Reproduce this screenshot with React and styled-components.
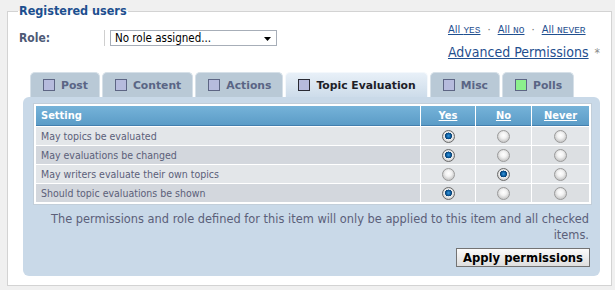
import React from "react";
import styled, { createGlobalStyle } from "styled-components";

const GlobalStyle = createGlobalStyle`
  html, body {
    margin: 0;
    background: #f0f0f0;
  }
  body {
    font-family: "DejaVu Sans Condensed", "DejaVu Sans", sans-serif;
    font-stretch: condensed;
    font-size: 10.5px;
  }
`;

const Box = styled.fieldset`
  margin: 4px 3px 0 7px;
  padding: 0 11px 9px 11px;
  border: 1px solid #d3d3d3;
  background: #fff;
  min-width: 0;
`;

const Legend = styled.legend`
  padding: 0 1px;
  margin-left: -1px;
  font-size: 12.5px;
  line-height: 14px;
  font-weight: bold;
  color: #1d4f8f;
`;

const TopRow = styled.div`
  display: flex;
  align-items: flex-start;
`;

const RoleGroup = styled.div`
  display: flex;
  align-items: center;
  margin-top: 12px;
`;

const RoleLabel = styled.label`
  width: 85px;
  font-size: 12px;
  font-weight: bold;
  color: #4e5a76;
`;

const Separator = styled.span`
  width: 1px;
  height: 16px;
  background: #cfcfcf;
  margin-right: 5px;
`;

const SelectWrap = styled.div`
  position: relative;
  width: 167px;
  height: 16px;
`;

const Select = styled.select`
  appearance: none;
  width: 100%;
  height: 16px;
  margin: 0;
  padding: 0 0 0 4px;
  border: 1px solid #a7aeb8;
  border-radius: 0;
  background: #fff;
  font-family: inherit;
  font-stretch: inherit;
  font-size: 11.5px;
  color: #000;
`;

const Arrow = styled.svg`
  position: absolute;
  right: 6px;
  top: 7px;
  pointer-events: none;
`;

const LinkGroup = styled.div`
  margin-left: auto;
  margin-top: 5px;
  display: flex;
  flex-direction: column;
  align-items: flex-start;
  gap: 8px;
`;

const QuickLinks = styled.div`
  display: flex;
  align-items: baseline;
  color: #555;
  font-size: 11px;
`;

const Link = styled.a`
  color: #1f4f8f;
  text-decoration: underline;
  font-size: ${(p) => (p.$big ? "14px" : "inherit")};
`;

const Caps = styled.span`
  font-family: "Liberation Mono", monospace;
  font-size: 9.5px;
  text-transform: uppercase;
`;

const Dot = styled.span`
  margin: 0 7px;
  color: #666;
`;

const Star = styled.span`
  margin-left: 6px;
  color: #8a8a8a;
  font-size: 12px;
`;

const Tabs = styled.div`
  display: flex;
  gap: 2px;
  margin: 12px 0 0 11px;
`;

const Tab = styled.div`
  display: flex;
  align-items: center;
  gap: 6px;
  height: 25px;
  box-sizing: border-box;
  padding: 0 11px 0 12px;
  border: 1px solid ${(p) => (p.$active ? "#f4f8fc" : "#d6e0e8")};
  border-bottom: none;
  border-radius: 5px 5px 0 0;
  background: ${(p) =>
    p.$active ? "linear-gradient(#e8f0f8, #cddcea)" : "#b9c9d6"};
  color: ${(p) => (p.$active ? "#1e1e28" : "#5a6585")};
  font-family: "DejaVu Sans", sans-serif;
  font-stretch: normal;
  font-size: 10.8px;
  font-weight: bold;
`;

const Check = styled.span`
  width: 12px;
  height: 12px;
  box-sizing: border-box;
  border: 1px solid ${(p) => (p.$active ? "#2a2a33" : "#5d6584")};
  background: ${(p) => (p.$green ? "#8cf08c" : "#b6bbdd")};
`;

const Panel = styled.div`
  margin-left: 4px;
  padding: 7px 9px 9px 11px;
  background: #c9d9e8;
  border-radius: 6px;
`;

const Table = styled.table`
  width: 100%;
  border-collapse: separate;
  border-spacing: 1px;
  border: 1px solid #fff;
  outline: 1px solid #c2ced9;
  background: #fff;
`;

const Th = styled.th`
  height: 19px;
  padding: 0 5px;
  border-bottom: 1px solid #437fae;
  background: linear-gradient(#76b3d9, #5b9cc7);
  color: #fff;
  font-size: 11px;
  font-weight: bold;
  text-align: ${(p) => (p.$center ? "center" : "left")};
  text-decoration: ${(p) => (p.$center ? "underline" : "none")};
  width: ${(p) => p.$w || "auto"};
`;

const Td = styled.td`
  height: 18px;
  padding: 0 5px;
  color: #5b6079;
  background: ${(p) => (p.$dark ? (p.$center ? "#dcdfe2" : "#d3d7dd") : "#e3e6e9")};
  text-align: ${(p) => (p.$center ? "center" : "left")};
  vertical-align: middle;
  line-height: 0;
  & > span.txt {
    line-height: 18px;
  }
`;

const Radio = styled.span`
  display: inline-block;
  width: 13px;
  height: 13px;
  box-sizing: border-box;
  border-radius: 50%;
  border: 1px solid ${(p) => (p.$on ? "#6a6a6a" : "#9a9a9a")};
  background: ${(p) =>
    p.$on
      ? "radial-gradient(circle at 50% 45%, #3c9ae0 0, #0b5c9e 2.2px, #0a3f70 3.3px, #f2f2f2 3.6px, #cfcfcf 6px)"
      : "radial-gradient(circle at 50% 40%, #ffffff 0, #f2f2f2 3px, #cdcdcd 6px)"};
`;

const Note = styled.p`
  margin: 7px 0 0;
  padding: 0 2px 0 12px;
  text-align: right;
  line-height: 16px;
  color: #5b6079;
  font-family: "DejaVu Sans", sans-serif;
  font-stretch: normal;
  font-size: 11.4px;
`;

const Actions = styled.div`
  display: flex;
  justify-content: flex-end;
  margin-top: 5px;
  padding-right: 1px;
`;

const Button = styled.button`
  height: 19px;
  padding: 0 6px;
  border: 1px solid #737373;
  background: linear-gradient(#fbfbfb, #dedede);
  font-family: "DejaVu Sans", sans-serif;
  font-stretch: normal;
  font-size: 11.6px;
  font-weight: bold;
  color: #000;
`;

const tabs = [
  { label: "Post" },
  { label: "Content" },
  { label: "Actions" },
  { label: "Topic Evaluation", active: true },
  { label: "Misc" },
  { label: "Polls", green: true },
];

const rows = [
  { label: "May topics be evaluated", value: 0 },
  { label: "May evaluations be changed", value: 0 },
  { label: "May writers evaluate their own topics", value: 1 },
  { label: "Should topic evaluations be shown", value: 0 },
];

export default function App() {
  return (
    <>
      <GlobalStyle />
      <Box>
        <Legend>Registered users</Legend>
        <TopRow>
          <RoleGroup>
            <RoleLabel>Role:</RoleLabel>
            <Separator />
            <SelectWrap>
              <Select defaultValue="none">
                <option value="none">No role assigned...</option>
              </Select>
              <Arrow width="7" height="4" viewBox="0 0 7 4">
                <path d="M0 0h7L3.5 4z" fill="#000" />
              </Arrow>
            </SelectWrap>
          </RoleGroup>
          <LinkGroup>
            <QuickLinks>
              <Link>All <Caps>yes</Caps></Link>
              <Dot>·</Dot>
              <Link>All <Caps>no</Caps></Link>
              <Dot>·</Dot>
              <Link>All <Caps>never</Caps></Link>
            </QuickLinks>
            <div>
              <Link $big>Advanced Permissions</Link>
              <Star>*</Star>
            </div>
          </LinkGroup>
        </TopRow>
        <Tabs>
          {tabs.map((t) => (
            <Tab key={t.label} $active={t.active}>
              <Check $active={t.active} $green={t.green} />
              {t.label}
            </Tab>
          ))}
        </Tabs>
        <Panel>
          <Table>
            <thead>
              <tr>
                <Th>Setting</Th>
                <Th $center $w="44px">Yes</Th>
                <Th $center $w="45px">No</Th>
                <Th $center $w="47px">Never</Th>
              </tr>
            </thead>
            <tbody>
              {rows.map((r, i) => (
                <tr key={r.label}>
                  <Td $dark={i % 2 === 1}>
                    <span className="txt">{r.label}</span>
                  </Td>
                  {[0, 1, 2].map((c) => (
                    <Td key={c} $center $dark={i % 2 === 1}>
                      <Radio $on={r.value === c} />
                    </Td>
                  ))}
                </tr>
              ))}
            </tbody>
          </Table>
          <Note>
            The permissions and role defined for this item will only be applied
            to this item and all checked items.
          </Note>
          <Actions>
            <Button>Apply permissions</Button>
          </Actions>
        </Panel>
      </Box>
    </>
  );
}
